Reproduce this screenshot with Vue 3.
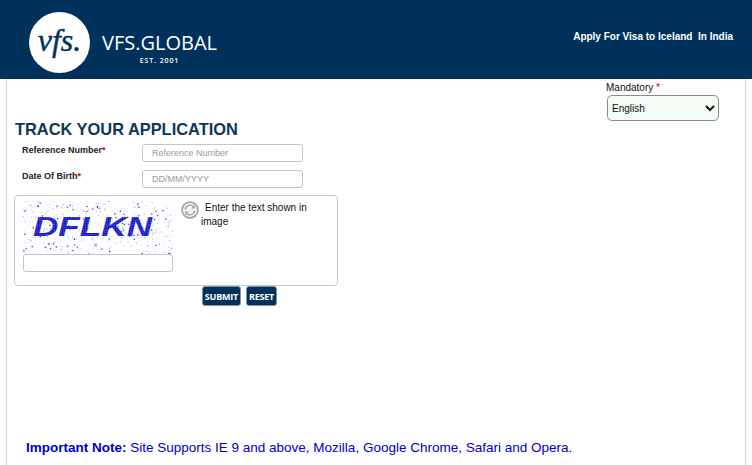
<script setup>
import { computed } from 'vue';

// seeded noise so the captcha looks the same on every load
const noise = computed(() => {
    let seed = 41;
    const next = () => {
        seed = (seed * 16807) % 2147483647;
        return seed / 2147483647;
    };
    const dots = [];
    for (let i = 0; i < 900; i++) {
        const kind = next();
        dots.push({
            x: (next() * 150).toFixed(1),
            y: (next() * 53).toFixed(1),
            r: kind > 0.93 ? 0.8 : kind > 0.7 ? 0.5 : 0.35,
            o: kind > 0.93 ? 0.85 : kind > 0.7 ? 0.5 : 0.28
        });
    }
    return dots;
});
</script>

<template>
    <div class="page">
        <header class="top">
            <div class="brand">
                <div class="seal">vfs.</div>
                <div class="brand-text">
                    <div class="brand-name">VFS.GLOBAL</div>
                    <div class="brand-est">EST. 2001</div>
                </div>
            </div>
            <div class="top-title">Apply For Visa to Iceland&nbsp; In India</div>
        </header>

        <main class="content">
            <div class="lang-row">
                <div class="lang">
                    <div class="lang-label">Mandatory <span class="req">*</span></div>
                    <select class="lang-select">
                        <option>English</option>
                    </select>
                </div>
            </div>

            <h1 class="title">TRACK YOUR APPLICATION</h1>

            <div class="field first">
                <label>Reference Number<span class="req">*</span></label>
                <input type="text" placeholder="Reference Number" />
            </div>
            <div class="field">
                <label>Date Of Birth<span class="req">*</span></label>
                <input type="text" placeholder="DD/MM/YYYY" />
            </div>

            <div class="captcha-box">
                <div class="captcha-left">
                    <svg class="captcha-img" width="150" height="53" viewBox="0 0 150 53">
                        <defs>
                            <pattern id="dots" width="2.4" height="2.4" patternUnits="userSpaceOnUse">
                                <rect width="2.4" height="2.4" fill="#5252e4" />
                                <circle cx="1.2" cy="1.2" r="1" fill="#0808b8" />
                            </pattern>
                        </defs>
                        <circle v-for="(d, i) in noise" :key="i" :cx="d.x" :cy="d.y" :r="d.r" fill="#2a2ac8" :opacity="d.o" />
                        <text x="10" y="35" class="captcha-text" fill="url(#dots)" textLength="119" lengthAdjust="spacingAndGlyphs">DFLKN</text>
                    </svg>
                    <input type="text" class="captcha-input" />
                </div>
                <div class="captcha-side">
                    <svg class="refresh" width="18" height="18" viewBox="0 0 20 20">
                        <circle cx="10" cy="10" r="8.8" fill="#f4f4f4" stroke="#a0a0a0" stroke-width="1.8" />
                        <path d="M4.8 9.2A5.3 5.3 0 0 1 14 6.4" fill="none" stroke="#a0a0a0" stroke-width="1.6" />
                        <path d="M15.4 4.4V8.2H11.6Z" fill="#a0a0a0" />
                        <path d="M15.2 10.8A5.3 5.3 0 0 1 6 13.6" fill="none" stroke="#a0a0a0" stroke-width="1.6" />
                        <path d="M4.6 15.6V11.8H8.4Z" fill="#a0a0a0" />
                    </svg>
                    <div class="captcha-hint">Enter the text shown in image</div>
                </div>
            </div>

            <div class="actions">
                <button class="btn submit">SUBMIT</button>
                <button class="btn reset">RESET</button>
            </div>

            <p class="note"><b>Important Note:</b> Site Supports IE 9 and above, Mozilla, Google Chrome, Safari and Opera.</p>
        </main>
    </div>
</template>

<style scoped>
.page {
    width: 752px;
    height: 465px;
    overflow: hidden;
    background: #fff;
    font-family: "Liberation Sans", Arial, sans-serif;
    color: #111;
}

.top {
    height: 79px;
    background: #00315b;
    display: flex;
    justify-content: space-between;
    color: #fff;
}

.brand {
    display: flex;
    padding: 12px 0 0 29px;
}

.seal {
    width: 61px;
    height: 61px;
    border-radius: 50%;
    background: #fff;
    color: #00315b;
    font-family: "Liberation Serif", serif;
    font-style: italic;
    font-size: 32px;
    line-height: 57px;
    text-align: center;
    -webkit-text-stroke: 0.4px #00315b;
}

.brand-text {
    margin: 20px 0 0 12px;
    text-align: center;
}

.brand-name {
    font-family: "Open Sans", sans-serif;
    font-size: 20px;
    line-height: 22px;
}

.brand-est {
    font-family: "Open Sans", sans-serif;
    font-size: 7px;
    font-weight: 600;
    line-height: 10px;
    letter-spacing: 0.9px;
    margin-top: 2px;
}

.top-title {
    font-size: 10px;
    font-weight: bold;
    line-height: 13px;
    padding: 30px 19px 0 0;
}

.content {
    height: 386px;
    margin: 0 6px;
    padding: 0 0 0 7px;
    border-left: 1px solid #d4d4d4;
    border-right: 1px solid #d4d4d4;
    position: relative;
}

.lang-row {
    display: flex;
    justify-content: flex-end;
    padding: 2px 25px 0 0;
}

.lang {
    width: 113px;
}

.lang-label {
    font-size: 10px;
    line-height: 13px;
    margin-left: -1px;
}

.req {
    color: #d00000;
}

.lang-select {
    display: block;
    width: 112px;
    height: 26px;
    margin-top: 1px;
    padding: 0;
    border: 1px solid #8a8a8a;
    border-radius: 5px;
    background-color: #f3fbf4;
    font-family: "Liberation Sans", Arial, sans-serif;
    font-size: 10px;
    color: #111;
}

.title {
    margin: -1px 0 0;
    padding-left: 1px;
    font-size: 16.4px;
    line-height: 18px;
    color: #0d3659;
}

.field {
    display: flex;
    align-items: flex-start;
    margin-top: 8px;
    padding-left: 8px;
}

.field.first {
    margin-top: 6px;
}

.field label {
    width: 120px;
    font-size: 9px;
    font-weight: bold;
    line-height: 12px;
    color: #222;
}

.field input {
    width: 161px;
    height: 18px;
    box-sizing: border-box;
    padding: 0 9px;
    border: 1px solid #c4c4c4;
    border-radius: 3px;
    font-family: "Liberation Sans", Arial, sans-serif;
    font-size: 9px;
    outline: none;
}

input::placeholder {
    color: #999;
    opacity: 1;
}

.captcha-box {
    width: 324px;
    height: 91px;
    box-sizing: border-box;
    margin-top: 7px;
    padding: 5px 8px;
    border: 1px solid #c8c8c8;
    border-radius: 4px;
    display: flex;
}

.captcha-left {
    width: 150px;
    flex: none;
}

.captcha-img {
    display: block;
}

.captcha-text {
    font-family: "Liberation Sans", Arial, sans-serif;
    font-size: 28px;
    font-weight: bold;
    font-style: italic;
}

.captcha-input {
    display: block;
    width: 150px;
    height: 18px;
    box-sizing: border-box;
    border: 1px solid #c4c4c4;
    border-radius: 3px;
    outline: none;
}

.captcha-side {
    width: 130px;
    margin-left: 8px;
    font-size: 10px;
    line-height: 14px;
}

.refresh {
    float: left;
    margin: 0 2px 12px 0;
}

.captcha-hint {
    text-indent: 4px;
}

.actions {
    display: flex;
    gap: 5px;
    padding-left: 188px;
}

.btn {
    height: 20px;
    padding: 0;
    border: 1px solid #7f96aa;
    border-radius: 3px;
    background: #00315b;
    color: #fff;
    font-family: "Open Sans", sans-serif;
    font-size: 9px;
    font-weight: bold;
    letter-spacing: -0.2px;
}

.submit {
    width: 39px;
}

.reset {
    width: 31px;
}

.note {
    position: absolute;
    left: 19px;
    top: 360px;
    margin: 0;
    font-size: 13.5px;
    line-height: 18px;
    color: #0000c8;
    white-space: nowrap;
}
</style>
